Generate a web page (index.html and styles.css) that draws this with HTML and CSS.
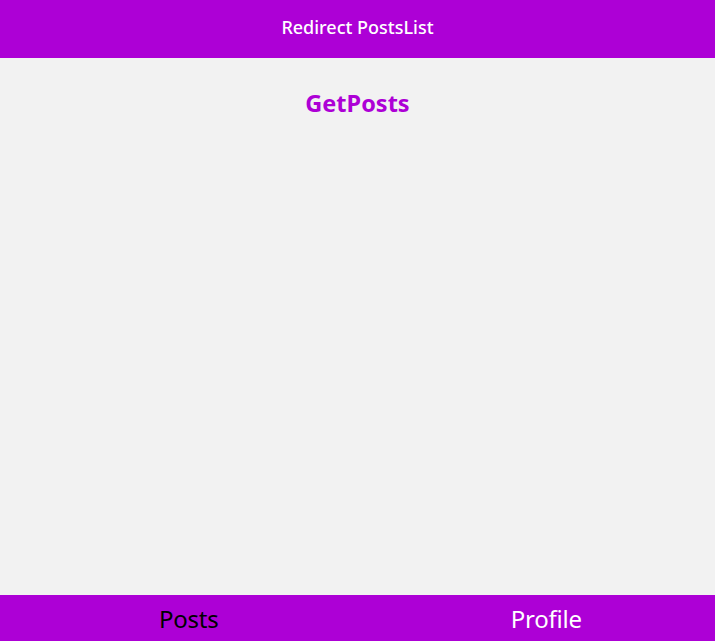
FILE: index.html
```html
<!DOCTYPE html>
<html>
<head>
<meta charset="utf-8">
<link rel="stylesheet" href="styles.css">
</head>
<body>
<div class="app">
  <header class="topbar"><span class="title">Redirect PostsList</span></header>
  <main class="content"><h1 class="heading">GetPosts</h1></main>
  <nav class="tabbar">
    <div class="tab tab-active">Posts</div>
    <div class="tab">Profile</div>
  </nav>
</div>
</body>
</html>
```
FILE: styles.css
```css
html, body {
  margin: 0;
  padding: 0;
  height: 100%;
}
body {
  font-family: "Noto Sans", "DejaVu Sans", sans-serif;
  background: #f2f2f2;
}
.app {
  display: flex;
  flex-direction: column;
  height: 100vh;
}
.topbar {
  height: 58px;
  flex: none;
  background: #ad00d6;
  display: flex;
  align-items: center;
  justify-content: center;
}
.title {
  color: #ffffff;
  font-size: 18px;
  font-weight: 500;
  line-height: 24px;
  margin-bottom: 5px;
}
.content {
  flex: 1;
  display: flex;
  justify-content: center;
  align-items: flex-start;
}
.heading {
  margin: 28px 0 0 0;
  color: #ad00d6;
  font-size: 23.5px;
  font-weight: 700;
  line-height: 34px;
}
.tabbar {
  height: 46px;
  flex: none;
  background: #ad00d6;
  display: flex;
}
.tab {
  flex: 1;
  display: flex;
  align-items: center;
  justify-content: center;
  padding-left: 20px;
  font-size: 24px;
  color: #ffffff;
  letter-spacing: -0.2px;
}
.tab-active {
  color: #000000;
}
```
